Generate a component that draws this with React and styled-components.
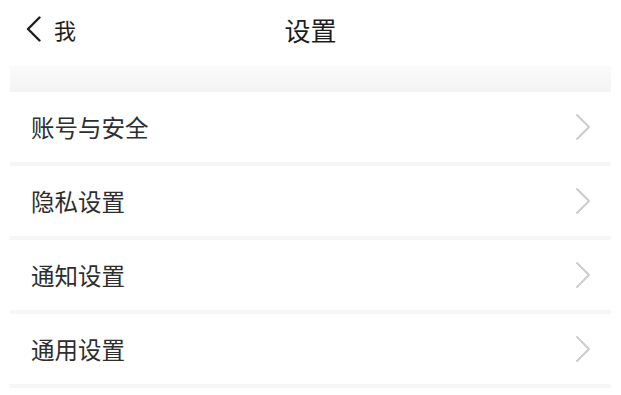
import React from "react";
import styled, { createGlobalStyle } from "styled-components";

const Global = createGlobalStyle`
  html, body { margin: 0; padding: 0; background: #ffffff; }
  body { font-family: "Noto Sans CJK SC", "Noto Sans", sans-serif; color: #333; }
`;

const Page = styled.div`
  width: 621px;
  height: 395px;
  overflow: hidden;
  background: #fff;
`;

const Header = styled.div`
  height: 58px;
  margin-bottom: 8px;
  display: grid;
  grid-template-columns: 1fr auto 1fr;
  align-items: center;
  padding: 0 26px;
`;

const Back = styled.div`
  display: flex;
  align-items: center;
  gap: 13px;
  font-size: 22px;
  color: #1e1e1e;
`;

const Title = styled.div`
  font-size: 26px;
  color: #1e1e1e;
`;

const Band = styled.div`
  margin: 0 10px;
  height: 26px;
  background: linear-gradient(#fbfbfb, #f3f3f3);
`;

const List = styled.div`
  margin: 0 10px;
  display: flex;
  flex-direction: column;
`;

const Row = styled.div`
  height: 70px;
  display: flex;
  align-items: center;
  justify-content: space-between;
  padding: 0 20px 0 21px;
  border-bottom: 4px solid #f6f6f6;
  font-size: 23.5px;
  color: #2e2e2e;
`;

const Chevron = () => (
  <svg width="16" height="28" viewBox="0 0 16 28" fill="none">
    <path d="M2 2 L14 14 L2 26" stroke="#cccccc" strokeWidth="2" strokeLinecap="round" strokeLinejoin="round" />
  </svg>
);

const BackIcon = () => (
  <svg width="15" height="26" viewBox="0 0 15 26" fill="none">
    <path d="M13.5 1.5 L2 13 L13.5 24.5" stroke="#1e1e1e" strokeWidth="2.4" strokeLinecap="round" strokeLinejoin="round" />
  </svg>
);

const items = ["账号与安全", "隐私设置", "通知设置", "通用设置"];

export default function App() {
  return (
    <Page>
      <Global />
      <Header>
        <Back>
          <BackIcon />
          <span>我</span>
        </Back>
        <Title>设置</Title>
        <div />
      </Header>
      <Band />
      <List>
        {items.map((t) => (
          <Row key={t}>
            <span>{t}</span>
            <Chevron />
          </Row>
        ))}
      </List>
    </Page>
  );
}
